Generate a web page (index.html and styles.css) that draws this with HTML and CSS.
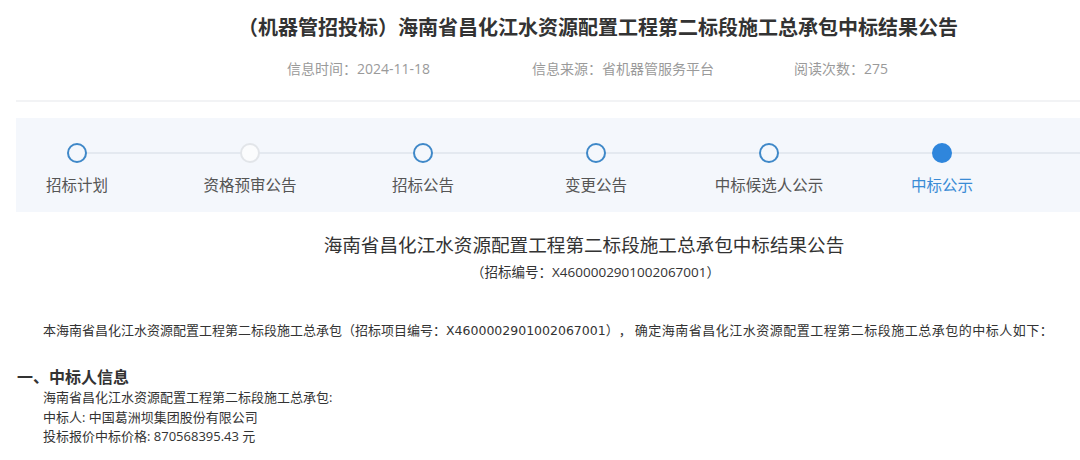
FILE: index.html
```html
<!DOCTYPE html>
<html lang="zh-CN">
    <head>
        <meta charset="UTF-8">
        <meta name="viewport" content="width=device-width, initial-scale=1.0">
        <title>海南省昌化江水资源配置工程第二标段施工总承包中标结果公告</title>
        <link rel="stylesheet" href="styles.css">
    </head>
    <body>
        <div class="header">
            <h1 class="title">（机器管招投标）海南省昌化江水资源配置工程第二标段施工总承包中标结果公告</h1>
            <div class="meta">
                <span class="meta-time">信息时间：2024-11-18</span>
                <span class="meta-src">信息来源：省机器管服务平台</span>
                <span class="meta-read">阅读次数：275</span>
            </div>
        </div>

        <div class="main">
            <!-- 流程步骤 -->
            <div class="steps">
                <ul class="step-list">
                    <li class="step"><i class="dot"></i><span>招标计划</span></li>
                    <li class="step disabled"><i class="dot"></i><span>资格预审公告</span></li>
                    <li class="step"><i class="dot"></i><span>招标公告</span></li>
                    <li class="step"><i class="dot"></i><span>变更公告</span></li>
                    <li class="step"><i class="dot"></i><span>中标候选人公示</span></li>
                    <li class="step active"><i class="dot"></i><span>中标公示</span></li>
                </ul>
            </div>

            <div class="content">
                <h2 class="sub-title">海南省昌化江水资源配置工程第二标段施工总承包中标结果公告</h2>
                <p class="code">（招标编号：X4600002901002067001）</p>
                <p class="intro">本海南省昌化江水资源配置工程第二标段施工总承包（招标项目编号：<span class="num">X4600002901002067001</span>），<span class="tail">确定海南省昌化江水资源配置工程第二标段施工总承包的中标人如下：</span></p>

                <h3 class="section">一、中标人信息</h3>
                <div class="info">
                    <p>海南省昌化江水资源配置工程第二标段施工总承包:</p>
                    <p>中标人: 中国葛洲坝集团股份有限公司</p>
                    <p>投标报价中标价格: 870568395.43 元</p>
                </div>
            </div>
        </div>
    </body>
</html>
```

FILE: styles.css
```css
body{
    margin: 0;
    font-family: "Open Sans", "Noto Sans CJK SC", sans-serif;
    color: #333;
    background-color: #fff;
    text-spacing-trim: space-all;
}

ul{
    padding: 0;
    margin: 0;
    list-style: none;
}

p{
    margin: 0;
}

/* 标题 */
.header{
    padding-top: 14px;
    padding-left: 116px;
    text-align: center;
}

.header .title{
    margin: 0;
    font-size: 20px;
    line-height: 28px;
    font-weight: bold;
    color: #333;
}

.meta{
    display: flex;
    margin-top: 17px;
    padding-left: 171px;
    font-size: 14px;
    line-height: 20px;
    color: #9a9a9a;
}

.meta-time{
    margin-right: 102px;
}

.meta-src{
    margin-right: 80px;
}

.main{
    margin-left: 16px;
    margin-top: 21px;
    border-top: 2px solid #f2f3f5;
}

/* 步骤条 */
.steps{
    margin-top: 16px;
    height: 94px;
    box-sizing: border-box;
    padding-top: 25px;
    background-color: #f4f7fc;
}

.step-list{
    display: flex;
    gap: 53px;
    padding-left: 1px;
    background-image: linear-gradient(#e4e9f0, #e4e9f0);
    background-repeat: no-repeat;
    background-size: calc(100% - 61px) 2px;
    background-position: 61px 9px;
}

.step{
    display: flex;
    flex-direction: column;
    align-items: center;
    width: 120px;
}

.step .dot{
    display: block;
    width: 20px;
    height: 20px;
    box-sizing: border-box;
    border: 2px solid #3f88c8;
    border-radius: 50%;
    background-color: #f4f7fc;
}

.step span{
    margin-top: 11px;
    font-size: 15.5px;
    line-height: 22px;
    color: #555;
    white-space: nowrap;
}

.step.disabled .dot{
    border-color: #e2e5e9;
    background-color: #fbfcfd;
}

.step.active .dot{
    border-color: #2f86dc;
    background-color: #2f86dc;
}

.step.active span{
    color: #3a8bd5;
}

/* 正文 */
.content{
    padding-left: 1px;
}

.sub-title{
    margin: 21px 0 0;
    padding-left: 71px;
    font-size: 18.6px;
    line-height: 24px;
    font-weight: normal;
    text-align: center;
}

.code{
    margin-top: 5px;
    padding-left: 94px;
    font-size: 13.5px;
    line-height: 20px;
    text-align: center;
}

.intro{
    margin-top: 38px;
    padding-left: 26px;
    font-size: 13px;
    line-height: 20px;
    white-space: nowrap;
}

.intro .num{
    font-family: "DejaVu Sans", sans-serif;
    font-size: 12.5px;
}

.intro .tail{
    margin-left: 3px;
    letter-spacing: 0.5px;
}

.section{
    margin: 25px 0 0;
    font-size: 16px;
    line-height: 22px;
    font-weight: bold;
}

.info{
    padding-left: 26px;
    font-size: 13px;
    line-height: 19.5px;
}
```
